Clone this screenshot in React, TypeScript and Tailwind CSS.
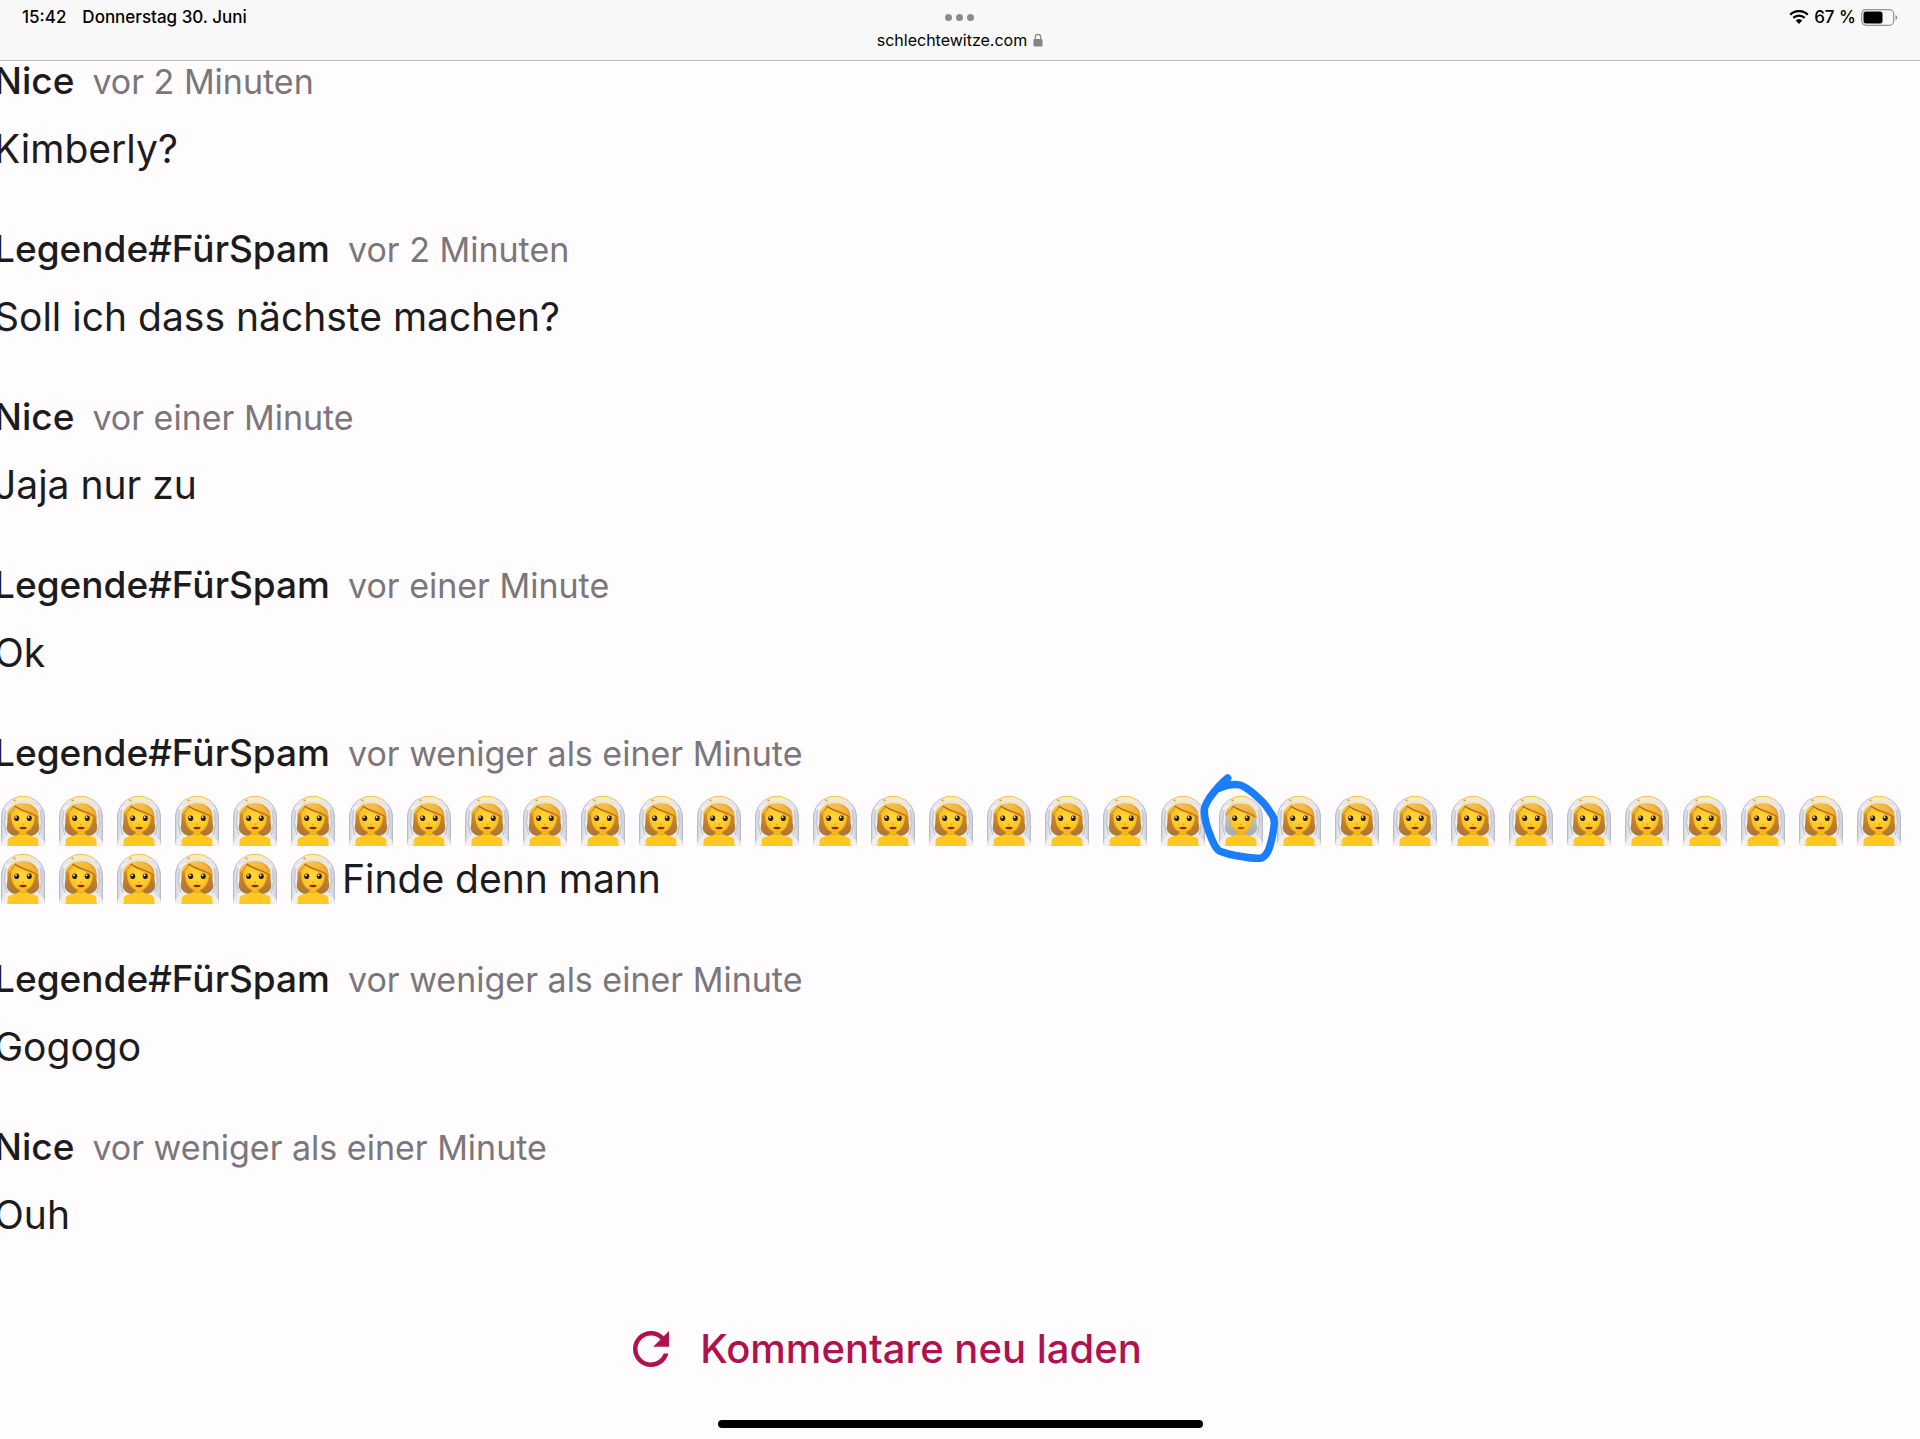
import React from 'react';
import { MdRefresh } from 'react-icons/md';

type CommentData = {
  author: string;
  time: string;
  text: string;
  emojis?: number;
  odd?: number;
};

const comments: CommentData[] = [
  { author: 'Nice', time: 'vor 2 Minuten', text: 'Kimberly?' },
  { author: 'Legende#FürSpam', time: 'vor 2 Minuten', text: 'Soll ich dass nächste machen?' },
  { author: 'Nice', time: 'vor einer Minute', text: 'Jaja nur zu' },
  { author: 'Legende#FürSpam', time: 'vor einer Minute', text: 'Ok' },
  {
    author: 'Legende#FürSpam',
    time: 'vor weniger als einer Minute',
    text: 'Finde denn mann',
    emojis: 39,
    odd: 21,
  },
  { author: 'Legende#FürSpam', time: 'vor weniger als einer Minute', text: 'Gogogo' },
  { author: 'Nice', time: 'vor weniger als einer Minute', text: 'Ouh' },
];

const EmojiGradients: React.FC = () => (
  <svg className="absolute size-0" aria-hidden="true">
    <defs>
      <radialGradient id="skin" cx="0.5" cy="0.45" r="0.6">
        <stop offset="0" stopColor="#ffd93c" />
        <stop offset="0.7" stopColor="#fdc623" />
        <stop offset="1" stopColor="#eda512" />
      </radialGradient>
      <linearGradient id="hair" x1="0" y1="0" x2="0" y2="1">
        <stop offset="0" stopColor="#f5b62c" />
        <stop offset="0.45" stopColor="#c98424" />
        <stop offset="1" stopColor="#a8753c" />
      </linearGradient>
      <linearGradient id="grey" x1="0" y1="0" x2="0" y2="1">
        <stop offset="0" stopColor="#f0c04a" />
        <stop offset="0.4" stopColor="#c3c2bb" />
        <stop offset="1" stopColor="#a2a9af" />
      </linearGradient>
      <linearGradient id="fringe" x1="0" y1="0" x2="1" y2="1">
        <stop offset="0" stopColor="#fccb4b" />
        <stop offset="1" stopColor="#eda32a" />
      </linearGradient>
      <linearGradient id="veil" x1="0" y1="0" x2="1" y2="0">
        <stop offset="0" stopColor="#ced0d8" />
        <stop offset="0.12" stopColor="#eff0f4" />
        <stop offset="0.88" stopColor="#e8e9ee" />
        <stop offset="1" stopColor="#c8cad2" />
      </linearGradient>
    </defs>
  </svg>
);

const Bride: React.FC<{ groom?: boolean }> = ({ groom = false }) => (
  <svg viewBox="0 0 58 58" className="inline-block size-[58px] align-top" role="img" aria-label={groom ? 'Mann mit Schleier' : 'Frau mit Schleier'}>
    <path d="M7 54V27C7 17 12 10 19 7c5-4 15-4 20 0 7 3 12 10 12 20v27z" fill="url(#veil)" />
    <path d="M7.500 54V27C7.500 17 12 10 19 7M39 7c7 3 11.500 10 11.500 20v27" fill="none" stroke="#b9bcc6" strokeWidth="1" />
    <path d="M18 8c5-5 17-5 22 0l3 4c-9-3-19-3-28 0z" fill="#fbeac0" />
    <path d="M18 8c5-5 17-5 22 0" fill="none" stroke="#efc050" strokeWidth="1" />
    {/* hair behind the face */}
    <path
      d="M14 21c1-6 8-10 15-10s14 4 15 10c1 5 0 7 1 12 1 5-1 8-5 10-6 2-16 2-22 0-4-2-6-5-5-10 1-5 0-7 1-12z"
      fill={groom ? 'url(#grey)' : 'url(#hair)'}
    />
    <path d="M12 18c-2 4 0 8-2 13 2 4 1 8 3 12M46 18c2 4 0 8 2 13-2 4-1 8-3 12" fill="none" stroke="#c3c7d2" strokeWidth="1.500" />
    <path d="M11 54c1-6 4-9 9-10 4-1 6-2 6-4h6c0 2 2 3 6 4 5 1 8 4 9 10z" fill="#fdc824" />
    <path d="M24 39c3 3 7 3 10 0v2c-3 3-7 3-10 0z" fill="#de9813" opacity="0.5" />
    <path d="M17 24c0-7 5-10 12-10s12 3 12 10c0 10-5 16.500-12 16.500S17 34 17 24z" fill="url(#skin)" />
    <path d="M13 24c0-7 5-11 10-12 10-1 20 4 22 14-5-1-10-3-14-5-4-2-7-4-9-6-1 4-5 7-9 9z" fill="url(#fringe)" />
    <path d="M21 14c5 5 17 6 22 11" fill="none" stroke="#a9661c" strokeWidth="1.200" />
    <path d="M21 14c-1 4-5 6-7 9" fill="none" stroke="#bd7a20" strokeWidth="1" />
    <path d="M12 14c8-5 26-5 34 0" fill="none" stroke="#e2e3e9" strokeWidth="2" />
    <ellipse cx="22.700" cy="26.300" rx="2.500" ry="2.800" fill="#33200c" />
    <ellipse cx="35.300" cy="26.300" rx="2.500" ry="2.800" fill="#33200c" />
    <circle cx="22" cy="25.200" r="0.900" fill="#fff" />
    <circle cx="34.600" cy="25.200" r="0.900" fill="#fff" />
    <path d="M28 32c0.700 0.500 1.500 0.500 2.200 0" fill="none" stroke="#d98b10" strokeWidth="0.900" />
    <path d="M25 35.400c2.500-0.800 5.500-0.800 8 0-1.500 2.600-6.500 2.600-8 0z" fill={groom ? '#a5571a' : '#8a260f'} />
    <path d="M7 54c0-5 2-8 6-8 1 3 1 6 0 8zM51 54c0-5-2-8-6-8-1 3-1 6 0 8z" fill="#f3efea" />
    <circle cx="20.500" cy="8.500" r="1.100" fill="#d9a13b" />
  </svg>
);

const CircledEmoji: React.FC = () => (
  <span className="relative inline-block align-top">
    <Bride groom />
    <svg viewBox="-16 -20 90 94" className="absolute -left-4 -top-5 z-10 h-[94px] w-[90px]" aria-hidden="true">
      <path
        d="M15.700-14C12-11 4-3-2 5.300-5 10-8 14-7.700 19c0 9 4 20 7.400 28 2 5 4 10 8.300 12.300 5 2 10 3.500 16.700 4.400 8 1.500 18 3 25 2.300 4-2 7-7 8.300-12.300 2-7 3.500-13 4-20 1-5 0-8-2-11-3-4-5-8-9-12.400-4-4-8-8-13-11.600-4-3-8-6-11.700-6C21-8 14-7 8-4"
        fill="none"
        stroke="#1a7efb"
        strokeWidth="7.500"
        strokeLinecap="round"
        strokeLinejoin="round"
      />
    </svg>
  </span>
);

const Comment: React.FC<{ comment: CommentData }> = ({ comment }) => (
  <article>
    <header className="flex h-[38px] items-baseline gap-[18px] leading-[38px]">
      <h2 className="text-[37px] font-medium">{comment.author}</h2>
      <time className="text-[34px] text-[#7b767b]">{comment.time}</time>
    </header>
    <p className="mt-5 text-[39px] leading-[58px]">
      {Array.from({ length: comment.emojis ?? 0 }, (_, i) =>
        i === comment.odd ? <CircledEmoji key={i} /> : <Bride key={i} />
      )}
      {comment.text}
    </p>
  </article>
);

const StatusBar: React.FC = () => (
  <header className="grid h-[61px] grid-cols-3 items-start border-b border-[#bdbbbd] bg-[#f8f8f8] px-[22px] text-[17px] leading-5 text-black">
    <div className="flex gap-4 pt-[7px] font-medium">
      <span>15:42</span>
      <span>Donnerstag 30. Juni</span>
    </div>
    <div className="flex flex-col items-center pt-[14px]">
      <button aria-label="Fenster" className="flex gap-1">
        <span className="size-[7px] rounded-full bg-[#8c8c8c]" />
        <span className="size-[7px] rounded-full bg-[#8c8c8c]" />
        <span className="size-[7px] rounded-full bg-[#8c8c8c]" />
      </button>
      <div className="mt-[9px] flex items-center gap-[6px] text-base leading-5">
        <span>schlechtewitze.com</span>
        <svg viewBox="0 0 10 14" className="h-[14px] w-[10px]" aria-hidden="true">
          <rect x="0.500" y="6" width="9" height="7.500" rx="1.200" fill="#858585" />
          <path d="M2.300 6.500V4a2.700 2.700 0 0 1 5.400 0v2.500" fill="none" stroke="#858585" strokeWidth="1.200" />
        </svg>
      </div>
    </div>
    <div className="flex items-center justify-end gap-[5px] pt-[7px] font-medium">
      <svg viewBox="0 0 20 14" className="h-[14px] w-5" aria-hidden="true">
        <path d="M1.200 4.700a12.600 12.600 0 0 1 17.600 0M4.300 7.900a8.200 8.200 0 0 1 11.400 0" fill="none" stroke="#000" strokeWidth="2.300" />
        <path d="M10 14l-3.300-3.400a4.800 4.800 0 0 1 6.600 0z" fill="#000" />
      </svg>
      <span>67 %</span>
      <svg viewBox="0 0 37 17" className="h-[17px] w-[37px]" aria-hidden="true">
        <rect x="0.700" y="0.700" width="32" height="15.600" rx="4.500" fill="none" stroke="#929292" strokeWidth="1.200" />
        <rect x="2.500" y="2.500" width="19" height="12" rx="2.500" fill="#000" />
        <path d="M34.500 6c2.400 0.800 2.400 4.200 0 5z" fill="#929292" />
      </svg>
    </div>
  </header>
);

const App: React.FC = () => {
  return (
    <div className="flex min-h-screen flex-col overflow-hidden bg-[#fffcfd] font-['Inter',sans-serif] text-[#1c1b1d]">
      <EmojiGradients />
      <StatusBar />
      <main className="-ml-[6px] pt-px">
        <section className="flex flex-col gap-[52px]">
          {comments.map((comment, i) => (
            <Comment key={i} comment={comment} />
          ))}
        </section>
        <div className="flex justify-center pt-[76px] pr-[148px]">
          <button className="flex items-center gap-[22px] text-[40px] font-medium leading-[58px] text-[#b0124f]">
            <MdRefresh className="size-[54px]" />
            Kommentare neu laden
          </button>
        </div>
      </main>
      <div className="mx-auto mt-auto mb-[11px] h-2 w-[485px] rounded-full bg-black" />
    </div>
  );
};

export default App;
